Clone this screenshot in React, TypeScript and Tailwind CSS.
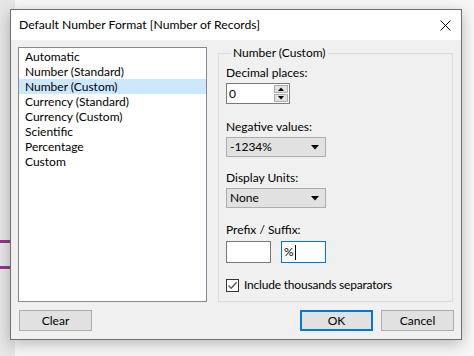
import React from 'react';

const formats = [
  'Automatic',
  'Number (Standard)',
  'Number (Custom)',
  'Currency (Standard)',
  'Currency (Custom)',
  'Scientific',
  'Percentage',
  'Custom',
];

const Arrow: React.FC = () => (
  <svg width="8" height="5" viewBox="0 0 8 5">
    <path d="M0 0 H8 L4 4.5 Z" fill="#000" />
  </svg>
);

const Dropdown: React.FC<{ value: string }> = ({ value }) => (
  <div className="flex h-[20px] w-[100px] items-center justify-between border border-[#adadad] bg-[#e1e1e1] pl-[3px] pr-[6px]">
    <span>{value}</span>
    <Arrow />
  </div>
);

const App: React.FC = () => {
  return (
    <div className="relative h-[356px] w-[474px] overflow-hidden bg-[#f7f7f7] font-['Segoe_UI','Lato',sans-serif] text-[12px] leading-[16px] text-black">
      {/* background behind the dialog */}
      <div className="absolute left-0 top-0 h-full w-[15px] bg-[#e6e6e6]" />
      <div className="absolute left-0 top-[240px] h-[3px] w-[12px] bg-[#8e3a8e]" />
      <div className="absolute left-0 top-[266px] h-[3px] w-[12px] bg-[#8e3a8e]" />

      {/* dialog */}
      <div className="absolute left-[10px] top-[9px] flex h-[331px] w-[452px] flex-col border border-[#6e6e6e] bg-[#f0f0f0] shadow-[0_4px_14px_rgba(0,0,0,0.25)]">
        <div className="flex h-[30px] items-center justify-between bg-white pl-[8px] pr-[10px]">
          <span className="text-[12.2px]">Default Number Format [Number of Records]</span>
          <svg width="11" height="11" viewBox="0 0 11 11">
            <path d="M0.5 0.5 L10.5 10.5 M10.5 0.5 L0.5 10.5" stroke="#000" strokeWidth="1" />
          </svg>
        </div>

        <div className="flex flex-1 flex-col px-[7px] pt-[7px] pb-[8px]">
          <div className="flex gap-[11px]">
            {/* list */}
            <div className="h-[255px] w-[189px] border border-[#828790] bg-white pt-[1px]">
              {formats.map((f) => (
                <div
                  key={f}
                  className={`h-[15px] pl-[6px] leading-[15px] ${f === 'Number (Custom)' ? 'bg-[#cce8ff]' : ''}`}
                >
                  {f}
                </div>
              ))}
            </div>

            {/* group box */}
            <fieldset className="mt-[-1px] h-[256px] w-[235px] border border-[#dcdcdc] px-[7px]">
              <legend className="ml-[5px] px-[2px] leading-[14px]">Number (Custom)</legend>

              <div className="mt-[5px]">Decimal places:</div>
              <div className="mt-[2px] flex h-[21px] w-[64px] items-center border border-[#7a7a7a] bg-white pl-[2px]">
                <span className="flex-1">0</span>
                <div className="mr-[1px] flex h-[17px] w-[14px] flex-col gap-[1px]">
                  <div className="flex flex-1 items-center justify-center border border-[#adadad] bg-[#e1e1e1]">
                    <svg width="6" height="4" viewBox="0 0 6 4">
                      <path d="M0 4 H6 L3 0.5 Z" fill="#000" />
                    </svg>
                  </div>
                  <div className="flex flex-1 items-center justify-center border border-[#adadad] bg-[#e1e1e1]">
                    <svg width="6" height="4" viewBox="0 0 6 4">
                      <path d="M0 0 H6 L3 3.5 Z" fill="#000" />
                    </svg>
                  </div>
                </div>
              </div>

              <div className="mt-[15px]">Negative values:</div>
              <div className="mt-[2px]">
                <Dropdown value="-1234%" />
              </div>

              <div className="mt-[13px]">Display Units:</div>
              <div className="mt-[2px]">
                <Dropdown value="None" />
              </div>

              <div className="mt-[14px]">Prefix / Suffix:</div>
              <div className="mt-[3px] flex gap-[10px]">
                <div className="h-[22px] w-[45px] border border-[#7a7a7a] bg-white" />
                <div className="flex h-[22px] w-[45px] items-center border border-[#0078d7] bg-white pl-[2px]">
                  <span>%</span>
                  <span className="ml-[1px] h-[15px] w-[1px] bg-black" />
                </div>
              </div>

              <div className="mt-[14px] flex items-center gap-[5px]">
                <div className="flex h-[13px] w-[13px] items-center justify-center border border-[#333] bg-white">
                  <svg width="11" height="11" viewBox="0 0 11 11">
                    <path d="M1.5 5.5 L4.2 8.3 L9.6 2.2" stroke="#555" strokeWidth="1.3" fill="none" />
                  </svg>
                </div>
                <span className="tracking-[-0.2px]">Include thousands separators</span>
              </div>
            </fieldset>
          </div>

          <div className="mt-[8px] flex items-center">
            <button className="ml-[1px] h-[21px] w-[73px] border border-[#adadad] bg-[#e1e1e1]">Clear</button>
            <div className="flex-1" />
            <button className="h-[21px] w-[73px] border-2 border-[#0078d7] bg-[#e1e1e1]">OK</button>
            <button className="ml-[8px] h-[21px] w-[73px] border border-[#adadad] bg-[#e1e1e1]">Cancel</button>
          </div>
        </div>
      </div>
    </div>
  );
};

export default App;
